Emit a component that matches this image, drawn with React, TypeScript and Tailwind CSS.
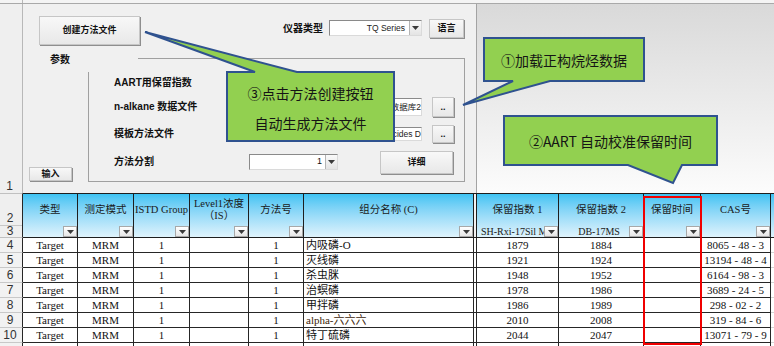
import React from 'react';

const winBtn =
  "flex items-center justify-center bg-linear-to-b from-[#f8f8f8] to-[#e8e8e8] border border-[#c6c6c6] shadow-[1px_1px_0_#8e8e8e] font-bold text-[9px] text-[#111] leading-none";
const sunken =
  "bg-white border border-t-[#8a8a8a] border-l-[#8a8a8a] border-r-[#dadada] border-b-[#dadada]";

function Tri() {
  return (
    <svg width="7" height="4" viewBox="0 0 7 4">
      <path d="M0 0h7L3.5 4z" fill="#3a3a3a" />
    </svg>
  );
}

function DropArrow() {
  return (
    <div className="w-[12px] h-full shrink-0 bg-linear-to-b from-[#fafafa] to-[#e4e4e4] border-l border-[#b4b4b4] flex items-center justify-center">
      <Tri />
    </div>
  );
}

function FilterBtn() {
  return (
    <div className="w-[14px] h-[11px] shrink-0 bg-linear-to-b from-white to-[#e6e6e6] border border-[#a8a8a8] flex items-center justify-center">
      <Tri />
    </div>
  );
}

function Panel() {
  return (
    <div className="w-[454px] shrink-0 bg-[#f0f0f0] border-r border-[#a3a3a3] flex flex-col">
      <div className="flex items-start pt-[12px] pl-[16px] h-[41px]">
        <div className={`${winBtn} w-[101px] h-[29px]`}>创建方法文件</div>
        <div className="ml-[143px] mt-[5px] w-[40px] h-[16px] leading-[16px] text-[10px] font-bold whitespace-nowrap">
          仪器类型
        </div>
        <div className={`${sunken} ml-[6px] mt-[4px] w-[93px] h-[16px] flex`}>
          <div className="flex-1 flex items-center justify-end pr-[4px] text-[8.5px] text-[#222]">TQ Series</div>
          <DropArrow />
        </div>
        <div className={`${winBtn} ml-[7px] mt-[3px] w-[35px] h-[19px]`}>语言</div>
      </div>

      <div className="flex mt-[13px] h-[124px]">
        <div className="w-[65px] shrink-0 flex flex-col">
          <div className="ml-[27px] -mt-[4px] leading-[12px] text-[10px] font-bold">参数</div>
          <div className={`${winBtn} mt-auto mb-[1px] ml-[6px] w-[43px] h-[14px] text-[7.5px]`}>输入</div>
        </div>
        <div className="w-[377px] h-full border-r border-b border-[#a0a0a0] flex flex-col">
          <div className="h-[14px] flex shrink-0">
            <div className="w-[50px]" />
            <div className="flex-1 border-t border-[#a0a0a0]" />
          </div>
          <div className="flex-1 border-l border-[#a0a0a0] pl-[25px] flex flex-col text-[10px] font-bold">
            <div className="h-[22px] flex items-center">
              <div className="w-[135px] leading-none">AART用保留指数</div>
            </div>
            <div className="h-[26px] flex items-center">
              <div className="w-[135px] leading-none">n-alkane 数据文件</div>
              <div className={`${sunken} w-[173px] h-[18px] flex items-center justify-end overflow-hidden whitespace-nowrap text-[8.5px] font-normal text-[#222]`}>
                C:\AART\Data\正构烷烃数据库2
              </div>
              <div className={`${winBtn} ml-[10px] w-[22px] h-[20px]`}>..</div>
            </div>
            <div className="h-[28px] flex items-center">
              <div className="w-[135px] leading-none">模板方法文件</div>
              <div className={`${sunken} w-[173px] h-[14px] flex items-center justify-end overflow-hidden whitespace-nowrap text-[8.5px] font-normal text-[#222]`}>
                C:\AART\Method\Pesticides D
              </div>
              <div className={`${winBtn} ml-[10px] w-[22px] h-[18px]`}>..</div>
            </div>
            <div className="h-[28px] flex items-center">
              <div className="w-[135px] leading-none">方法分割</div>
              <div className={`${sunken} w-[89px] h-[16px] flex`}>
                <div className="flex-1 flex items-center justify-end pr-[3px] text-[9px] font-normal">1</div>
                <DropArrow />
              </div>
              <div className={`${winBtn} ml-[42px] w-[73px] h-[23px]`}>详细</div>
            </div>
          </div>
        </div>
      </div>
    </div>
  );
}

type Col = { w: string; title?: React.ReactNode; sub?: string; subAlign?: string };

const cols: Col[] = [
  { w: 'w-[55px]', title: '类型' },
  { w: 'w-[56px]', title: '测定模式' },
  { w: 'w-[56px]', title: 'ISTD Group' },
  {
    w: 'w-[59px]',
    title: (
      <div className="flex flex-col items-center leading-[12px]">
        <span>Level1浓度</span>
        <span>（IS）</span>
      </div>
    ),
  },
  { w: 'w-[55px]', title: '方法号' },
  { w: 'w-[170px]', title: '组分名称 (C)' },
  { w: 'w-[82px]', title: '保留指数 1', sub: 'SH-Rxi-17Sil MS', subAlign: 'left' },
  { w: 'w-[85px]', title: '保留指数 2', sub: 'DB-17MS', subAlign: 'center' },
  { w: 'w-[57px]', title: '保留时间' },
  { w: 'w-[70px]', title: 'CAS号' },
];

const rows = [
  ['内吸磷-O', '1879', '1884', '8065 - 48 - 3'],
  ['灭线磷', '1921', '1924', '13194 - 48 - 4'],
  ['杀虫脒', '1948', '1952', '6164 - 98 - 3'],
  ['治螟磷', '1978', '1986', '3689 - 24 - 5'],
  ['甲拌磷', '1986', '1989', '298 - 02 - 2'],
  ['alpha-六六六', '2010', '2008', '319 - 84 - 6'],
  ['特丁硫磷', '2044', '2047', '13071 - 79 - 9'],
];

function HeaderCell({ c }: { c: Col }) {
  return (
    <div className={`${c.w} shrink-0 h-full border-t border-b border-r border-[#1e1e1e] bg-linear-to-b from-[#3cc3f3] to-[#dff3fc] flex flex-col`}>
      <div className="h-[32px] flex items-center justify-center text-[10.5px] text-[#1a1a1a] whitespace-nowrap">
        {c.title}
      </div>
      <div className="h-[11px] flex items-end">
        {c.sub ? (
          <div
            className={`flex-1 overflow-hidden whitespace-nowrap text-[10px] leading-[11px] text-[#1a1a1a] ${
              c.subAlign === 'left' ? 'pl-[4px] text-left' : 'text-center pl-[10px]'
            }`}
          >
            {c.sub}
          </div>
        ) : (
          <div className="flex-1" />
        )}
        <FilterBtn />
      </div>
    </div>
  );
}

function DataRow({ n, r }: { n?: number; r?: string[] }) {
  const cell = 'shrink-0 h-full border-b border-r border-[#262626] flex items-center justify-center leading-[14px] text-[11px] overflow-hidden whitespace-nowrap';
  return (
    <div className="flex h-[15px]">
      <div className="w-[23px] shrink-0 h-full bg-[#f2f2f2] border-b border-[#c8c8c8] border-r border-r-[#262626] flex items-end justify-center pr-[2px] font-['Liberation_Sans',sans-serif] text-[12px] leading-[14px] text-[#333]">
        {n ?? ''}
      </div>
      <div className={`${cell} w-[55px]`}>{r ? 'Target' : ''}</div>
      <div className={`${cell} w-[56px]`}>{r ? 'MRM' : ''}</div>
      <div className={`${cell} w-[56px]`}>{r ? '1' : ''}</div>
      <div className={`${cell} w-[59px]`} />
      <div className={`${cell} w-[55px]`}>{r ? '1' : ''}</div>
      <div className={`${cell} w-[170px] !justify-start pl-[2px] ${r && r[0].startsWith('alpha') ? 'text-[#3b2408]' : ''}`}>
        {r ? r[0] : ''}
      </div>
      <div className={`${cell} w-[3px] bg-white`} />
      <div className={`${cell} w-[82px]`}>{r ? r[1] : ''}</div>
      <div className={`${cell} w-[85px]`}>{r ? r[2] : ''}</div>
      <div className={`${cell} w-[57px]`} />
      <div className={`${cell} w-[70px]`}>{r ? r[3] : ''}</div>
      <div className="flex-1 h-full border-b border-[#d6d6d6]" />
    </div>
  );
}

function Table() {
  return (
    <div className="font-['Liberation_Serif','Noto_Sans_CJK_SC',serif] text-[#111]">
      <div className="flex h-[45px]">
        <div className="w-[23px] shrink-0 h-full bg-[#efefef] border-t border-b border-[#c0c0c0] border-r border-r-[#262626] flex flex-col font-['Liberation_Sans',sans-serif] text-[12px] text-[#333]">
          <div className="h-[33px] border-b border-[#c8c8c8] flex items-end justify-center pr-[2px] leading-[13px]">2</div>
          <div className="flex-1 flex items-end justify-center pr-[2px] leading-[11px]">3</div>
        </div>
        {cols.slice(0, 6).map((c, i) => (
          <HeaderCell key={i} c={c} />
        ))}
        <div className="w-[3px] shrink-0 h-full border-t border-b border-r border-[#1e1e1e] bg-[#f2f2f2]" />
        {cols.slice(6).map((c, i) => (
          <HeaderCell key={'b' + i} c={c} />
        ))}
        <div className="flex-1 h-full border-t border-b border-[#1e1e1e] bg-linear-to-b from-[#3cc3f3] to-[#dff3fc]" />
      </div>
      {rows.map((r, i) => (
        <DataRow key={i} n={i + 4} r={r} />
      ))}
      <DataRow />
    </div>
  );
}

function Callouts() {
  const txt = "absolute flex flex-col items-center justify-center font-['Noto_Sans_CJK_SC',sans-serif] text-[14px] text-[#151515]";
  return (
    <>
      <svg className="absolute left-0 top-0" width="774" height="346" viewBox="0 0 774 346">
        <g fill="#92d050" stroke="#2f528f" strokeWidth="2" strokeLinejoin="miter">
          <polygon points="227,72 255,72 145,32 297,72 394,72 394,141 227,141" />
          <polygon points="484,38 644,38 644,81 550,81 463,105 513,81 484,81" />
          <polygon points="504,116 717,116 717,165 682,165 673,183 628,165 504,165" />
        </g>
      </svg>
      <div className={`${txt} left-[227px] top-[72px] w-[167px] h-[69px] !justify-start pt-[6px] leading-[30px]`}>
        <div>③点击方法创建按钮</div>
        <div>自动生成方法文件</div>
      </div>
      <div className={`${txt} left-[484px] top-[38px] w-[160px] h-[43px] leading-none`}>
        <div>①加载正构烷烃数据</div>
      </div>
      <div className={`${txt} left-[504px] top-[116px] w-[213px] h-[49px] leading-none`}>
        <div>②AART 自动校准保留时间</div>
      </div>
      <div className="absolute left-[643px] top-[196px] w-[59px] h-[149px] border-2 border-[#f00000]" />
    </>
  );
}

export default function App() {
  return (
    <div className="relative w-[774px] h-[346px] overflow-hidden bg-white font-['Liberation_Sans','Noto_Sans_CJK_SC',sans-serif] text-[#111]">
      <div className="flex h-[4px] bg-[#f4f4f4] border-b border-[#a9a9a9]">
        <div className="w-[23px] border-r border-[#b8b8b8]" />
      </div>
      <div className="flex h-[189px]">
        <div className="w-[23px] shrink-0 bg-[#efefef] border-r border-[#b8b8b8] flex items-end justify-center pr-[3px] text-[12px] text-[#333] leading-[14px]">
          1
        </div>
        <Panel />
        <div className="flex-1 bg-linear-to-b from-[#d9d9d9] to-[#fcfcfc]" />
      </div>
      <Table />
      <Callouts />
    </div>
  );
}
